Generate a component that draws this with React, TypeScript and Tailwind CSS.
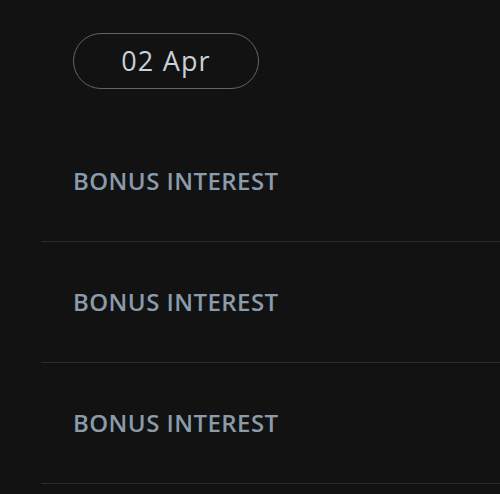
export default function App() {
  const rows = [0, 1, 2];
  return (
    <div className="w-[500px] h-[494px] overflow-hidden bg-[#121212]" style={{ fontFamily: '"Open Sans", sans-serif' }}>
      <div className="pl-[41px]">
        <div className="pl-[32px] pt-[33px] pb-[32px]">
          <div className="w-[186px] h-[56px] rounded-full border border-[#5b6770] flex items-center justify-center text-[27px] tracking-[1.2px] text-[#c9d0d6]">
            02 Apr
          </div>
        </div>
        {rows.map((r) => (
          <div key={r} className="h-[121px] border-b border-[#2c2c2c] flex items-center pl-[32px]">
            <span className="text-[24px] font-semibold text-[#8a9bab] tracking-[0.45px]">BONUS INTEREST</span>
          </div>
        ))}
      </div>
    </div>
  );
}
